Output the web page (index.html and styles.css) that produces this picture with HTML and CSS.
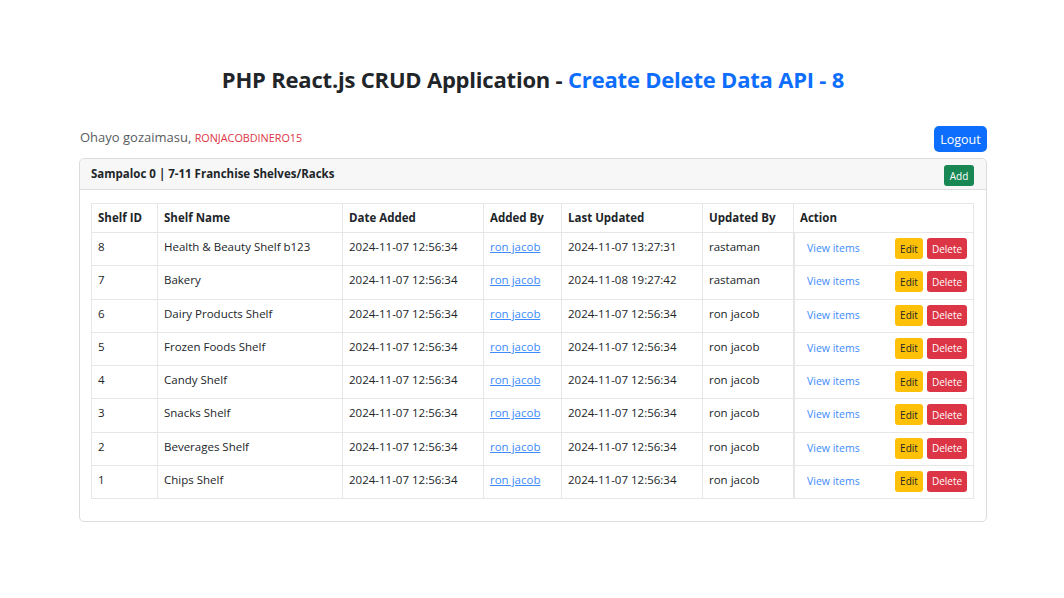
FILE: index.html
```html
<!DOCTYPE html>
<html>
<head>
<meta charset="utf-8">
<link rel="stylesheet" href="styles.css">
</head>
<body>
<div class="container">
  <h1 class="title">PHP React.js CRUD Application - <span class="accent">Create Delete Data API - 8</span></h1>
  <div class="topbar">
    <div class="greeting">Ohayo gozaimasu, <span class="user">RONJACOBDINERO15</span></div>
    <button class="btn btn-primary">Logout</button>
  </div>
  <div class="card">
    <div class="card-header">
      <span class="card-title">Sampaloc 0 | 7-11 Franchise Shelves/Racks</span>
      <button class="btn btn-success btn-sm">Add</button>
    </div>
    <div class="card-body">
      <table class="table">
        <thead>
          <tr>
            <th class="c-id">Shelf ID</th>
            <th class="c-name">Shelf Name</th>
            <th class="c-date">Date Added</th>
            <th class="c-by">Added By</th>
            <th class="c-upd">Last Updated</th>
            <th class="c-updby">Updated By</th>
            <th class="c-act">Action</th>
          </tr>
        </thead>
        <tbody>
          <tr><td>8</td><td>Health &amp; Beauty Shelf b123</td><td>2024-11-07 12:56:34</td><td><a href="#">ron jacob</a></td><td>2024-11-07 13:27:31</td><td>rastaman</td><td class="act"><div class="actions"><a class="view" href="#">View items</a><div class="btns"><button class="btn btn-warning btn-sm">Edit</button><button class="btn btn-danger btn-sm">Delete</button></div></div></td></tr>
          <tr><td>7</td><td>Bakery</td><td>2024-11-07 12:56:34</td><td><a href="#">ron jacob</a></td><td>2024-11-08 19:27:42</td><td>rastaman</td><td class="act"><div class="actions"><a class="view" href="#">View items</a><div class="btns"><button class="btn btn-warning btn-sm">Edit</button><button class="btn btn-danger btn-sm">Delete</button></div></div></td></tr>
          <tr><td>6</td><td>Dairy Products Shelf</td><td>2024-11-07 12:56:34</td><td><a href="#">ron jacob</a></td><td>2024-11-07 12:56:34</td><td>ron jacob</td><td class="act"><div class="actions"><a class="view" href="#">View items</a><div class="btns"><button class="btn btn-warning btn-sm">Edit</button><button class="btn btn-danger btn-sm">Delete</button></div></div></td></tr>
          <tr><td>5</td><td>Frozen Foods Shelf</td><td>2024-11-07 12:56:34</td><td><a href="#">ron jacob</a></td><td>2024-11-07 12:56:34</td><td>ron jacob</td><td class="act"><div class="actions"><a class="view" href="#">View items</a><div class="btns"><button class="btn btn-warning btn-sm">Edit</button><button class="btn btn-danger btn-sm">Delete</button></div></div></td></tr>
          <tr><td>4</td><td>Candy Shelf</td><td>2024-11-07 12:56:34</td><td><a href="#">ron jacob</a></td><td>2024-11-07 12:56:34</td><td>ron jacob</td><td class="act"><div class="actions"><a class="view" href="#">View items</a><div class="btns"><button class="btn btn-warning btn-sm">Edit</button><button class="btn btn-danger btn-sm">Delete</button></div></div></td></tr>
          <tr><td>3</td><td>Snacks Shelf</td><td>2024-11-07 12:56:34</td><td><a href="#">ron jacob</a></td><td>2024-11-07 12:56:34</td><td>ron jacob</td><td class="act"><div class="actions"><a class="view" href="#">View items</a><div class="btns"><button class="btn btn-warning btn-sm">Edit</button><button class="btn btn-danger btn-sm">Delete</button></div></div></td></tr>
          <tr><td>2</td><td>Beverages Shelf</td><td>2024-11-07 12:56:34</td><td><a href="#">ron jacob</a></td><td>2024-11-07 12:56:34</td><td>ron jacob</td><td class="act"><div class="actions"><a class="view" href="#">View items</a><div class="btns"><button class="btn btn-warning btn-sm">Edit</button><button class="btn btn-danger btn-sm">Delete</button></div></div></td></tr>
          <tr><td>1</td><td>Chips Shelf</td><td>2024-11-07 12:56:34</td><td><a href="#">ron jacob</a></td><td>2024-11-07 12:56:34</td><td>ron jacob</td><td class="act"><div class="actions"><a class="view" href="#">View items</a><div class="btns"><button class="btn btn-warning btn-sm">Edit</button><button class="btn btn-danger btn-sm">Delete</button></div></div></td></tr>
        </tbody>
      </table>
    </div>
  </div>
</div>
</body>
</html>
```

FILE: styles.css
```css
* { box-sizing: border-box; }
body {
  margin: 0;
  background: #fff;
  color: #212529;
  font-family: "Open Sans", "Noto Sans", Arial, sans-serif;
  font-size: 12px;
}
.container {
  width: 908px;
  margin-left: 79px;
  padding-top: 64px;
}
.title {
  margin: 0;
  text-align: center;
  font-size: 22px;
  line-height: 30px;
  font-weight: 700;
  letter-spacing: -0.2px;
}
.accent { color: #0d6efd; }
.topbar {
  margin-top: 32px;
  display: flex;
  justify-content: space-between;
  align-items: center;
  margin-bottom: 6px;
}
.greeting {
  font-size: 13px;
  color: #595c5f;
  margin-top: -4px;
  padding-left: 1px;
}
.user {
  color: #dc3545;
  font-size: 10.8px;
}
.btn {
  font-family: inherit;
  border: 1px solid transparent;
  border-radius: 5px;
  cursor: pointer;
  color: #fff;
}
.btn-primary {
  background: #0d6efd;
  font-size: 12.5px;
  height: 26px;
  width: 53px;
  padding: 0;
}
.btn-sm {
  font-size: 10px;
  height: 21px;
  padding: 0 4px;
  border-radius: 3px;
}
.btn-success { background: #198754; width: 30px; padding: 0; }
.btn-warning { background: #ffc107; color: #212529; width: 28px; padding: 0; }
.btn-danger { background: #dc3545; width: 40px; padding: 0; }
.card {
  border: 1px solid #dcdcdc;
  border-radius: 5px;
}
.card-header {
  height: 31px;
  background: #f7f7f7;
  border-bottom: 1px solid #dcdcdc;
  border-radius: 5px 5px 0 0;
  display: flex;
  align-items: center;
  justify-content: space-between;
  padding: 0 12px 0 11px;
}
.card-header .btn-sm {
  margin-top: 3px;
}
.card-title {
  font-weight: 700;
  font-size: 11.5px;
  margin-top: -1px;
}
.card-body {
  padding: 13px 12px 22px 11px;
}
.table {
  width: 100%;
  border-collapse: collapse;
  border: 1px solid #e3e3e3;
}
.table th, .table td {
  border: 1px solid #e6e6e6;
  padding: 5px 6px 6px;
  text-align: left;
  vertical-align: top;
  line-height: 17px;
  font-size: 11.5px;
}
.table th { font-weight: 700; padding: 5px 6px 6px; height: 29px; }
.table td { height: 33.25px; }
.c-id { width: 66px; }
.c-name { width: 185px; }
.c-date { width: 141px; }
.c-by { width: 78px; }
.c-upd { width: 141px; }
.c-updby { width: 91px; }
.table a { color: #3d8bfd; }
.table td.act {
  padding: 5px 6px 5px 6px;
  box-shadow: inset 1px 0 0 #e6e6e6;
}
.actions {
  display: flex;
  justify-content: space-between;
  align-items: center;
}
.view {
  font-size: 10.5px;
  text-decoration: none;
  padding-left: 7px;
}
.btns { display: flex; gap: 4px; }
```
